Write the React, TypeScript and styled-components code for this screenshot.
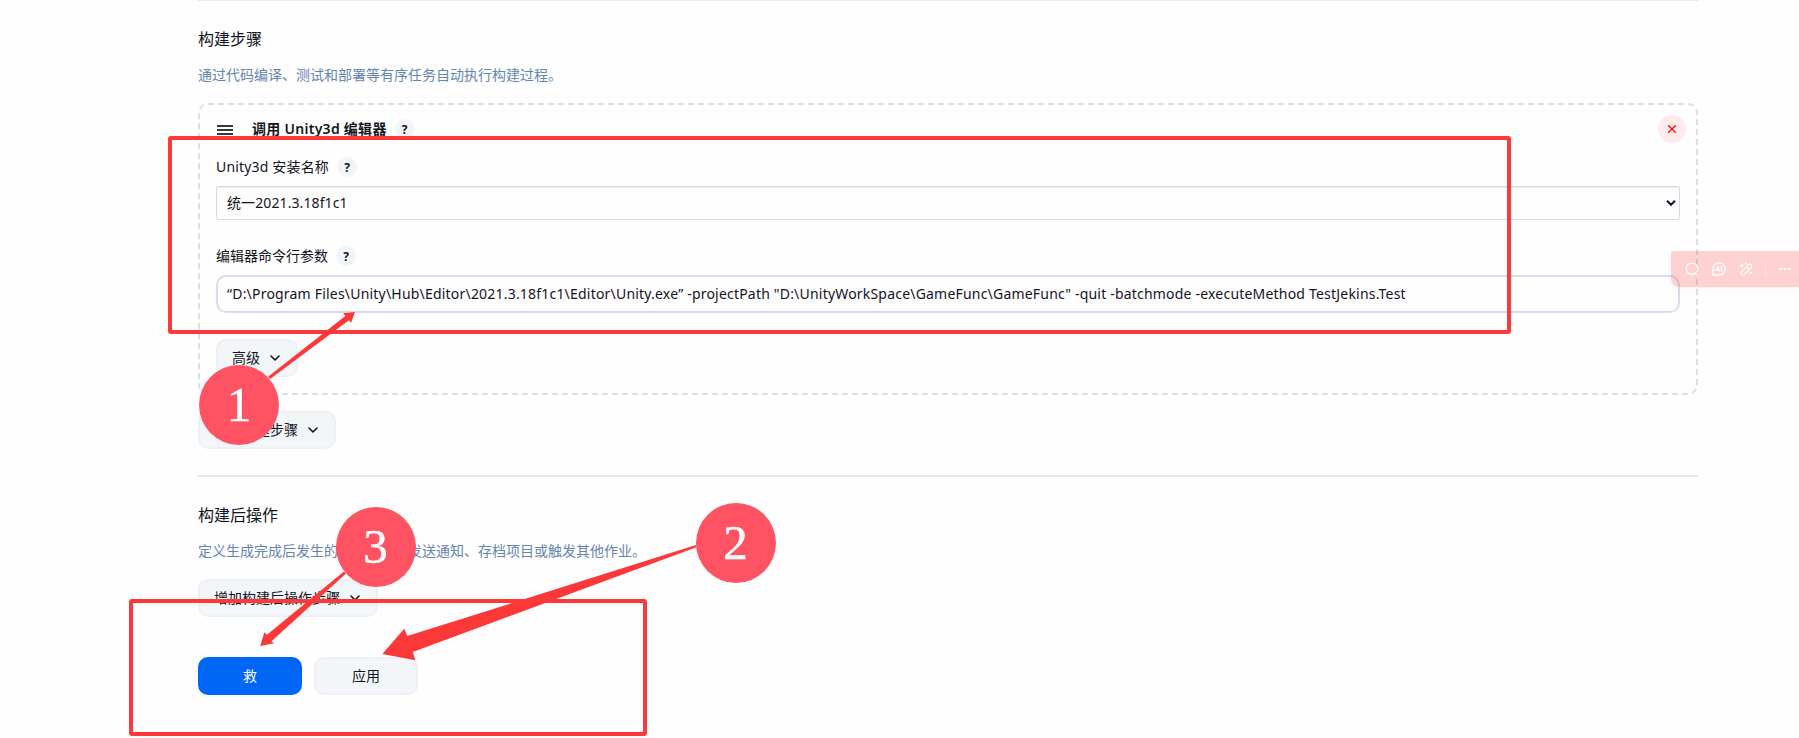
import React from "react";
import styled, { createGlobalStyle, css } from "styled-components";

const GlobalStyle = createGlobalStyle`
  * {
    box-sizing: border-box;
  }

  body {
    margin: 0;
    background-color: #fefefe;
    color: #14141f;
    font-family: "Noto Sans", "Noto Sans CJK SC", sans-serif;
    font-size: 14px;
    overflow: hidden;
  }
`;

const Chevron = () => (
  <svg width='12' height='12' viewBox='0 0 12 12' fill='none'>
    <path
      d='M2 4l4 4 4-4'
      stroke='#14141f'
      strokeWidth='1.6'
      strokeLinecap='round'
      strokeLinejoin='round'
    />
  </svg>
);

const App = () => {
  return (
    <Page>
      <GlobalStyle />
      <Section>
        <Title>构建步骤</Title>
        <Description>通过代码编译、测试和部署等有序任务自动执行构建过程。</Description>
        <Step>
          <StepHeader>
            <DragHandle>
              <i />
              <i />
              <i />
            </DragHandle>
            <StepName>调用 Unity3d 编辑器</StepName>
            <Help>?</Help>
            <RemoveButton>
              <svg width='10' height='10' viewBox='0 0 10 10'>
                <path d='M1.2 1.2l7.6 7.6M8.8 1.2l-7.6 7.6' stroke='#f00' strokeWidth='1.3' />
              </svg>
            </RemoveButton>
          </StepHeader>
          <Label>
            <Text $spacing={0.17}>Unity3d 安装名称</Text>
            <Help>?</Help>
          </Label>
          <Select>
            <Text $spacing={0.1}>统一2021.3.18f1c1</Text>
            <svg width='10' height='8' viewBox='0 0 10 8' fill='none'>
              <path d='M1 1.8l4 4 4-4' stroke='#14141f' strokeWidth='2' />
            </svg>
          </Select>
          <Label $second>
            <Text>编辑器命令行参数</Text>
            <Help>?</Help>
          </Label>
          <Input>
            <Text $spacing={0.2}>
              “D:\Program Files\Unity\Hub\Editor\2021.3.18f1c1\Editor\Unity.exe” -projectPath
              "D:\UnityWorkSpace\GameFunc\GameFunc" -quit -batchmode -executeMethod TestJekins.Test
            </Text>
          </Input>
          <Button $width={82}>
            <Text>高级</Text>
            <Chevron />
          </Button>
        </Step>
        <Button $width={138}>
          <Text>增加构建步骤</Text>
          <Chevron />
        </Button>
      </Section>
      <Section $last>
        <Title>构建后操作</Title>
        <Description>定义生成完成后发生的情况，例如发送通知、存档项目或触发其他作业。</Description>
        <Button $width={180}>
          <Text>增加构建后操作步骤</Text>
          <Chevron />
        </Button>
      </Section>
      <Actions>
        <Button $width={104} $center $primary>
          <Text>救</Text>
        </Button>
        <Button $width={104} $center>
          <Text>应用</Text>
        </Button>
      </Actions>

      <FloatingBar>
        <svg width='14' height='14' viewBox='0 0 14 14' fill='none' stroke='#fff' strokeWidth='1.4'>
          <circle cx='7' cy='6.8' r='5.7' />
          <path d='M11.3 12.2h1.2' strokeWidth='2' />
        </svg>
        <svg width='14' height='14' viewBox='0 0 14 14' fill='none' stroke='#fff' strokeWidth='1.3'>
          <path d='M.9 13V7A6.1 6.1 0 1 1 7 13z' />
          <path d='M3.7 9.3l1.8-4.6h.5l1.8 4.6M4.4 7.8h2.6M9.6 4.5v4.9' strokeWidth='1.4' />
        </svg>
        <svg width='14' height='14' viewBox='0 0 14 14' fill='none' stroke='#fff' strokeWidth='1.2'>
          <path d='M2.4 12.4a1.6 1.6 0 0 1 0-2.3l7-7.2a1.9 1.9 0 0 1 2.8 2.7l-7.1 7a1.9 1.9 0 0 1-2.7-.2zM7.8 4.8l2.6 2.6' />
          <path d='M2.7 1.6v4M.7 3.6h4M6.8.4v2.2M5.7 1.5h2.2M11.8 9.6v2.6M10.5 10.9h2.6' />
        </svg>
        <BarDivider />
        <svg width='12' height='4' viewBox='0 0 12 4' fill='#fff'>
          <circle cx='1.6' cy='2' r='1.3' />
          <circle cx='6' cy='2' r='1.3' />
          <circle cx='10.4' cy='2' r='1.3' />
        </svg>
      </FloatingBar>

      <Frame $x={168} $y={136} $w={1343} $h={198} />
      <Frame $x={129} $y={599} $w={518} $h={137} />
      <Arrows width='1799' height='738' viewBox='0 0 1799 738' fill='#fc3838'>
        <path d='M355 312L343.3 313.3L345.3 316L268 376.8L270 379L349 320.3L351 323z' />
        <path d='M382.3 654L404.3 628.7L407.3 636L696 545L697 547L412.7 652L415.3 660.3z' />
        <path d='M260.2 646L264.4 632.3L267 634.7L344 571.5L346 573.5L271.5 641.3L274 643.3z' />
      </Arrows>
      <Marker $x={239} $y={405}>
        1
      </Marker>
      <Marker $x={735.5} $y={543}>
        2
      </Marker>
      <Marker $x={375.5} $y={547}>
        3
      </Marker>
    </Page>
  );
};

const Page = styled.div`
  position: relative;
  height: 738px;
  padding-left: 198px;
  overflow: hidden;
`;

const Section = styled.section<{ $last?: boolean }>`
  width: 1500px;
  height: ${({ $last }) => ($last ? 182 : 475)}px;
  border-top: ${({ $last }) => ($last ? 2 : 1)}px solid #e5e9f2;
  padding-top: 26px;
`;

const Title = styled.div`
  height: 24px;
  line-height: 24px;
  font-size: 16px;
`;

const Description = styled.div`
  height: 22px;
  margin: 13px 0 17px;
  line-height: 22px;
  color: #6485b2;
  white-space: nowrap;
`;

const Text = styled.span<{ $spacing?: number }>`
  margin-top: -2px;
  letter-spacing: ${({ $spacing = 0 }) => $spacing}px;
  white-space: nowrap;
`;

const Step = styled.div`
  height: 292px;
  margin-bottom: 16px;
  padding: 0 16px;
  border: 2px dashed #d7e0ea;
  border-radius: 10px;
`;

const StepHeader = styled.div`
  display: flex;
  align-items: center;
  height: 48px;
`;

const DragHandle = styled.div`
  display: flex;
  flex-direction: column;
  gap: 2px;
  width: 16px;
  margin: 1px 19px 0 1px;

  i {
    height: 2px;
    background-color: #3a3546;
  }
`;

const StepName = styled.div`
  margin-top: -2px;
  font-weight: 600;
  letter-spacing: 0.28px;
`;

const Help = styled.span`
  display: inline-flex;
  align-items: center;
  justify-content: center;
  width: 20px;
  height: 20px;
  margin-left: 8px;
  border-radius: 50%;
  background-color: #f1f5f8;
  font-size: 12px;
  font-weight: 700;
`;

const RemoveButton = styled.div`
  display: flex;
  align-items: center;
  justify-content: center;
  width: 28px;
  height: 28px;
  margin: 0 -6px 0 auto;
  border-radius: 50%;
  background-color: #ffebeb;
`;

const Label = styled.div<{ $second?: boolean }>`
  display: flex;
  align-items: center;
  height: 20px;
  margin: ${({ $second }) => ($second ? "26px 0 9px" : "4px 0 9px")};
`;

const Select = styled.div`
  display: flex;
  align-items: center;
  justify-content: space-between;
  height: 34px;
  padding: 0 3px 0 10px;
  border: 1px solid #d5d8e8;
  border-radius: 3px;
  background-color: #fdfdfd;
  box-shadow: inset 0 1px 0 #eaecf4;
`;

const Input = styled.div`
  display: flex;
  align-items: center;
  height: 38px;
  margin-bottom: 26px;
  padding: 0 9px;
  border: 2px solid #d8dcea;
  border-radius: 10px;
  background-color: #fdfdfd;
`;

const Button = styled.div<{ $width: number; $primary?: boolean; $center?: boolean }>`
  display: flex;
  align-items: center;
  justify-content: space-between;
  width: ${({ $width }) => $width}px;
  height: 38px;
  padding: 0 15px 0 14px;
  border: 2px solid #edf1f5;
  border-radius: 10px;
  background-color: #f2f6f9;

  ${({ $center }) =>
    $center &&
    css`
      justify-content: center;
      padding: 0;
    `}

  ${({ $primary }) =>
    $primary &&
    css`
      border-color: #0066f5;
      background-color: #0066f5;
      color: #fff;
    `}
`;

const Actions = styled.div`
  display: flex;
  gap: 12px;
`;

const FloatingBar = styled.div`
  position: absolute;
  top: 251px;
  right: 0;
  display: flex;
  align-items: center;
  gap: 13px;
  width: 128px;
  height: 36px;
  padding-left: 14px;
  border-radius: 2px 0 0 8px;
  background-color: rgba(252, 56, 50, 0.22);
  box-shadow: 0 2px 6px rgba(0, 0, 0, 0.04);

  svg {
    flex-shrink: 0;
  }
`;

const BarDivider = styled.div`
  width: 1px;
  height: 16px;
  margin: 0 0 0 -1px;
  background-color: rgba(255, 255, 255, 0.4);
`;

const Frame = styled.div<{ $x: number; $y: number; $w: number; $h: number }>`
  position: absolute;
  left: ${({ $x }) => $x}px;
  top: ${({ $y }) => $y}px;
  width: ${({ $w }) => $w}px;
  height: ${({ $h }) => $h}px;
  border: 4px solid #fc3838;
  border-radius: 3px;
`;

const Arrows = styled.svg`
  position: absolute;
  left: 0;
  top: 0;
`;

const Marker = styled.div<{ $x: number; $y: number }>`
  position: absolute;
  left: ${({ $x }) => $x - 40}px;
  top: ${({ $y }) => $y - 40}px;
  width: 80px;
  height: 80px;
  border-radius: 50%;
  background-color: #ff5263;
  color: #fff;
  font-family: "Liberation Serif", serif;
  font-size: 49px;
  line-height: 79px;
  text-align: center;
  -webkit-text-stroke: 0.5px #fff;
`;

export default App;
